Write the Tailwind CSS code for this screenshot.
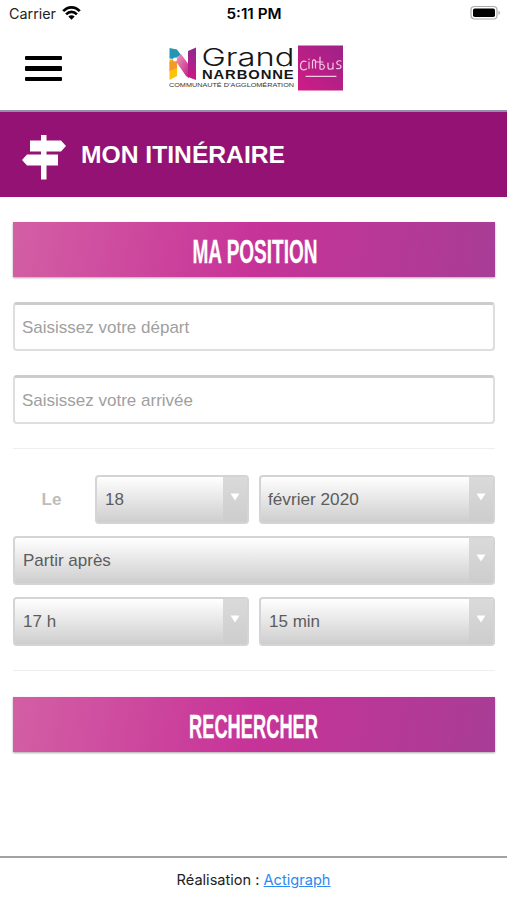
<!DOCTYPE html>
<html lang="fr">
<head>
    <meta charset="UTF-8">
    <meta name="viewport" content="width=device-width, initial-scale=1.0">
    <title>Mon itinéraire</title>
    <script src="https://cdn.jsdelivr.net/npm/@tailwindcss/browser@4"></script>
</head>
<body class="bg-white h-[900px] flex flex-col overflow-hidden font-['Liberation_Sans',sans-serif]">

    <!-- Status bar -->
    <div class="h-7 shrink-0 grid grid-cols-3 items-center pl-[9px] pr-[6px] font-['Inter',sans-serif] text-black">
        <div class="flex items-center gap-[6px]">
            <svg class="w-[47px] h-6 overflow-visible" viewBox="0 0 47 24"><text x="0" y="17" font-size="14" textLength="47" lengthAdjust="spacingAndGlyphs" fill="#222">Carrier</text></svg>
            <svg class="w-[19px] h-[14px] mt-[-2px]" viewBox="0 0 19 14" fill="none" stroke="#000" stroke-width="2.6">
                <path d="M1.2 5.2C6 .1 13 .1 17.800 5.200"/>
                <path d="M4.100 8.300C7.200 5.100 11.800 5.100 14.900 8.300"/>
                <path d="M6.300 10.600C8.200 8.900 10.800 8.900 12.700 10.600L9.500 13.700Z" fill="#000" stroke="none"/>
            </svg>
        </div>
        <svg class="justify-self-center w-[56px] h-6 mr-[2px]" viewBox="0 0 56 24"><text x="0.500" y="17" font-size="13.800" font-weight="600" textLength="55" lengthAdjust="spacingAndGlyphs">5:11 PM</text></svg>
        <svg class="justify-self-end w-[31px] h-4 mt-[-2px]" viewBox="0 0 31 16">
            <rect x="1" y="1.500" width="26" height="12.500" rx="3.500" fill="#fff" stroke="#aaa" stroke-width="1.200"/>
            <rect x="3" y="3.500" width="22" height="8.500" rx="1.800"/>
            <path d="M28.500 5.500C30.500 6.500 30.500 9 28.500 10Z" fill="#aaa"/>
        </svg>
    </div>

    <!-- Header -->
    <header class="h-[84px] shrink-0 flex items-start pl-[25px] border-b-2 border-[#9290ae]">
        <button class="mt-[27.500px] w-[37px] flex flex-col gap-[6px]">
            <span class="block h-[4.500px] w-full rounded-[1px] bg-black"></span>
            <span class="block h-[4.500px] w-full rounded-[1px] bg-black"></span>
            <span class="block h-[4.500px] w-full rounded-[1px] bg-black"></span>
        </button>
        <svg class="ml-[106px] mt-[17px] w-[176px] h-[46px] overflow-visible" viewBox="0 0 176 46">
            <defs>
                <linearGradient id="diag" x1="0" y1="0" x2="1" y2="1">
                    <stop offset="0" stop-color="#ee9fbd"/>
                    <stop offset="1" stop-color="#c51c86"/>
                </linearGradient>
                <linearGradient id="stem" x1="0" y1="0" x2="0" y2="1">
                    <stop offset="0" stop-color="#8e2b91"/>
                    <stop offset="1" stop-color="#cf1682"/>
                </linearGradient>
                <linearGradient id="citibus" x1="0" y1="1" x2="1" y2="0">
                    <stop offset="0" stop-color="#cf1c84"/>
                    <stop offset="1" stop-color="#9d2288"/>
                </linearGradient>
            </defs>
            <path d="M1.500 14L9 16V31L1.500 35Z" fill="#fdc30b"/>
            <path d="M1.500 17L5 14L9 17V23L1.500 26Z" fill="#f59b25"/>
            <path d="M1.500 3L9 4.500L13 10L6 14L1.500 13.500Z" fill="#2297b3"/>
            <path d="M7 15L13 9L21 20V33L18 31Z" fill="url(#diag)"/>
            <path d="M20 6L28 2.500V35L20 32Z" fill="url(#stem)"/>
            <circle cx="7" cy="14.500" r="2" fill="#fff"/>
            <g fill="#161616" font-family="Liberation Sans, sans-serif">
                <text x="33.500" y="21" font-size="24.500" font-family="Inter, sans-serif" font-weight="300" textLength="93" lengthAdjust="spacingAndGlyphs">Grand</text>
                <text x="34" y="33.600" font-size="12" font-weight="700" letter-spacing="0.700" textLength="92.500" lengthAdjust="spacingAndGlyphs">NARBONNE</text>
                <text x="1" y="42.300" font-size="5.800" fill="#333" textLength="125" lengthAdjust="spacingAndGlyphs">COMMUNAUTÉ D’AGGLOMÉRATION</text>
            </g>
            <rect x="130" y="0.500" width="45" height="45" fill="url(#citibus)"/>
            <!-- citibus script -->
            <g fill="none" stroke="#f4c9e4" stroke-width="1.200" stroke-linecap="round" stroke-linejoin="round">
                <path d="M138 16.500C134 15 132.500 18 132.500 21C132.500 25.500 136 25.500 138.500 24"/>
                <path d="M141 17V23.500M141 14V14.500M144.500 23V16.500C145 13.500 148 15 147.500 17V23"/>
                <path d="M152 12V24C157 26 158.500 19 152.500 19M147.500 17H155"/>
                <path d="M160 18V22C160 25 164.500 25 165 22V18V24"/>
                <path d="M173 16C169 15 167.500 18 170 19.500C174.500 20 174 24.500 168.500 23.500"/>
                <path d="M138 31.300H168"/>
            </g>
        </svg>
    </header>

    <!-- Page title -->
    <div class="h-[85px] shrink-0 flex items-center bg-[#941273] pl-[22px] pb-[2px]">
        <svg class="w-[44px] h-[46px] mt-[6px]" viewBox="0 0 44 46" fill="#fff">
            <path d="M19 1H24.500V6.500H39L44 12L39 17.500H24.500V20.500H36V31.500H24.500V45.500H19V31.500H5L0 26L5 20.500H19V17.500H8V6.500H19Z"/>
        </svg>
        <h1 class="ml-[14px] w-[207px] h-[34px]">
            <svg class="w-full h-full" viewBox="0 0 207 34"><text x="1" y="26" font-size="24.500" font-weight="700" fill="#fff" textLength="204" lengthAdjust="spacingAndGlyphs">MON ITINÉRAIRE</text></svg>
        </h1>
    </div>

    <main class="pl-[13px] pr-3 pt-[25px] flex flex-col text-[17px] text-[#5c5c5c]">
        <button class="h-[55px] shadow-[0_1px_2px_rgba(0,0,0,0.35)] bg-[linear-gradient(100deg,#d35fa4_0%,#c73398_50%,#a83d96_100%)]">
            <svg class="w-full h-full" viewBox="0 0 482 55"><text x="179.500" y="41.200" font-size="33.500" font-weight="700" fill="#fff" stroke="#fff" stroke-width="0.300" textLength="125" lengthAdjust="spacingAndGlyphs">MA POSITION</text></svg>
        </button>

        <input type="text" placeholder="Saisissez votre départ" class="mt-[25px] h-[49px] px-[7px] pt-[1px] rounded-[4px] border-2 border-[#dedede] border-t-[3px] border-t-[#cccccc] placeholder:text-[#a0a0a0]">
        <input type="text" placeholder="Saisissez votre arrivée" class="mt-6 h-[49px] px-[7px] pt-[1px] rounded-[4px] border-2 border-[#dedede] border-t-[3px] border-t-[#cccccc] placeholder:text-[#a0a0a0]">

        <hr class="mt-6 border-[#eeeeee]">

        <div class="mt-[26px] flex flex-col gap-3">
            <div class="flex">
                <label class="w-[82px] pr-[5px] flex items-center justify-center font-bold text-[#bdbdbd]">Le</label>
                <div class="w-[154px] h-[49px] flex items-center justify-between rounded-[4px] border-2 border-[#d4d4d4] bg-linear-to-b from-white to-[#cecece] overflow-hidden">
                    <span class="pl-2">18</span>
                    <span class="w-6 h-full pt-[16px] flex justify-center bg-linear-to-b from-[#dadada] to-[#cdcdcd]"><svg class="w-[10px] h-2" viewBox="0 0 10 8"><path d="M0.500 0.500H9.500L5 7.500Z" fill="#fff"/></svg></span>
                </div>
                <div class="ml-[10px] w-[236px] h-[49px] flex items-center justify-between rounded-[4px] border-2 border-[#d4d4d4] bg-linear-to-b from-white to-[#cecece] overflow-hidden">
                    <span class="pl-[7px] text-[17.2px]">février 2020</span>
                    <span class="w-6 h-full pt-[16px] flex justify-center bg-linear-to-b from-[#dadada] to-[#cdcdcd]"><svg class="w-[10px] h-2" viewBox="0 0 10 8"><path d="M0.500 0.500H9.500L5 7.500Z" fill="#fff"/></svg></span>
                </div>
            </div>
            <div class="h-[49px] flex items-center justify-between rounded-[4px] border-2 border-[#d4d4d4] bg-linear-to-b from-white to-[#cecece] overflow-hidden">
                <span class="pl-2">Partir après</span>
                <span class="w-6 h-full pt-[16px] flex justify-center bg-linear-to-b from-[#dadada] to-[#cdcdcd]"><svg class="w-[10px] h-2" viewBox="0 0 10 8"><path d="M0.500 0.500H9.500L5 7.500Z" fill="#fff"/></svg></span>
            </div>
            <div class="flex gap-[10px]">
                <div class="flex-1 h-[49px] flex items-center justify-between rounded-[4px] border-2 border-[#d4d4d4] bg-linear-to-b from-white to-[#cecece] overflow-hidden">
                    <span class="pl-2">17 h</span>
                    <span class="w-6 h-full pt-[16px] flex justify-center bg-linear-to-b from-[#dadada] to-[#cdcdcd]"><svg class="w-[10px] h-2" viewBox="0 0 10 8"><path d="M0.500 0.500H9.500L5 7.500Z" fill="#fff"/></svg></span>
                </div>
                <div class="flex-1 h-[49px] flex items-center justify-between rounded-[4px] border-2 border-[#d4d4d4] bg-linear-to-b from-white to-[#cecece] overflow-hidden">
                    <span class="pl-2">15 min</span>
                    <span class="w-6 h-full pt-[16px] flex justify-center bg-linear-to-b from-[#dadada] to-[#cdcdcd]"><svg class="w-[10px] h-2" viewBox="0 0 10 8"><path d="M0.500 0.500H9.500L5 7.500Z" fill="#fff"/></svg></span>
                </div>
            </div>
        </div>

        <hr class="mt-6 border-[#eeeeee]">

        <button class="mt-[26px] h-[55px] shadow-[0_1px_2px_rgba(0,0,0,0.35)] bg-[linear-gradient(100deg,#d35fa4_0%,#c73398_50%,#a83d96_100%)]">
            <svg class="w-full h-full" viewBox="0 0 482 55"><text x="176" y="41.200" font-size="33.500" font-weight="700" fill="#fff" stroke="#fff" stroke-width="0.300" textLength="129" lengthAdjust="spacingAndGlyphs">RECHERCHER</text></svg>
        </button>
    </main>

    <footer class="mt-auto h-[44px] shrink-0 flex justify-center items-center gap-1 pt-[3px] border-t-2 border-[#a2a2a2] font-['Inter',sans-serif] text-[14.6px] text-[#222]">
        <span>Réalisation :</span>
        <a href="#" class="text-[#2b8af0] underline">Actigraph</a>
    </footer>

</body>
</html>
